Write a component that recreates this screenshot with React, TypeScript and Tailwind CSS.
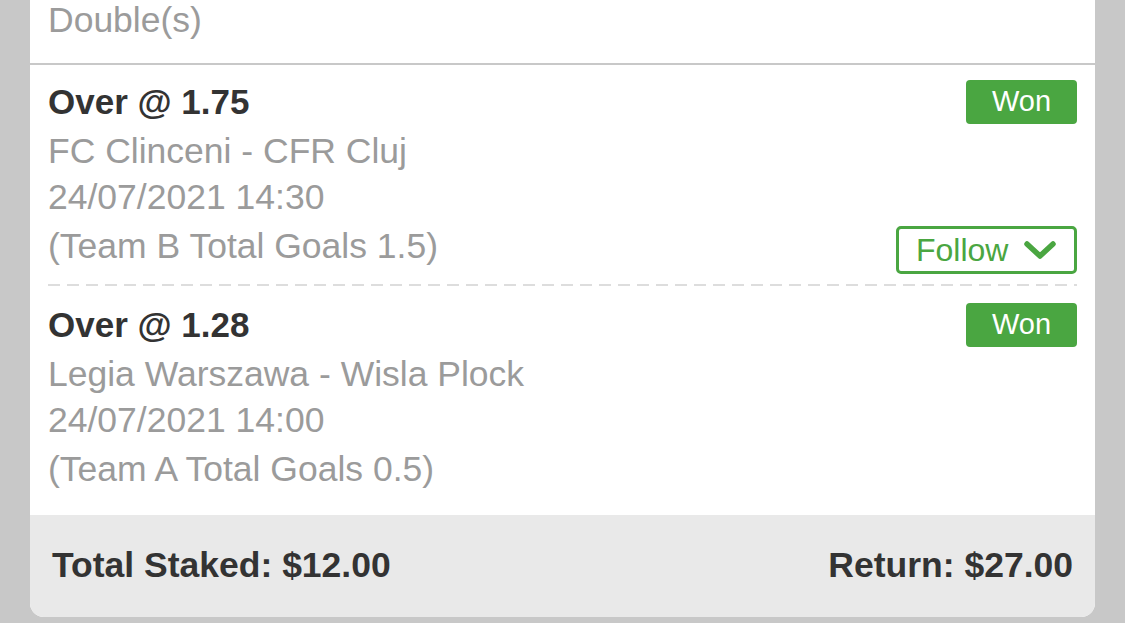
const FONT = { fontFamily: '"Liberation Sans", Arial, Helvetica, sans-serif' };

type Selection = {
  title: string;
  match: string;
  date: string;
  market: string;
  follow?: boolean;
};

const SELECTIONS: Selection[] = [
  {
    title: 'Over @ 1.75',
    match: 'FC Clinceni - CFR Cluj',
    date: '24/07/2021 14:30',
    market: '(Team B Total Goals 1.5)',
    follow: true,
  },
  {
    title: 'Over @ 1.28',
    match: 'Legia Warszawa - Wisla Plock',
    date: '24/07/2021 14:00',
    market: '(Team A Total Goals 0.5)',
  },
];

function Chevron() {
  return (
    <svg width="32" height="20" viewBox="0 0 32 20" fill="none">
      <polyline
        points="3,4 16,16 29,4"
        stroke="#4aa641"
        strokeWidth="5.5"
        strokeLinecap="round"
        strokeLinejoin="round"
      />
    </svg>
  );
}

function WonBadge() {
  return (
    <div className="flex h-[44px] w-[111px] items-center justify-center rounded-[4px] bg-[#4aa641] text-[29px] text-white">
      Won
    </div>
  );
}

function SelectionBlock({ sel, first }: { sel: Selection; first: boolean }) {
  return (
    <div className={first ? 'px-[18px] pt-[11px] pb-[10px]' : 'px-[18px] pt-[13px] pb-[18px]'}>
      <div className="flex items-center justify-between">
        <span className="text-[35px] font-bold leading-[52px] text-[#333]">{sel.title}</span>
        <WonBadge />
      </div>
      <div className="text-[35.5px] leading-[46px] text-[#9b9b9b]">{sel.match}</div>
      <div className="text-[35.5px] leading-[46px] text-[#9b9b9b]">{sel.date}</div>
      <div className="flex h-[54px] justify-between">
        <span className="text-[35.5px] leading-[52px] text-[#9b9b9b]">{sel.market}</span>
        {sel.follow && (
          <button className="flex h-[48px] w-[181px] items-center gap-[16px] self-end rounded-[5px] border-[3px] border-[#4aa641] pl-[17px] text-[32px] text-[#4aa641]">
            Follow
            <Chevron />
          </button>
        )}
      </div>
    </div>
  );
}

export default function App() {
  return (
    <div className="h-[623px] w-full overflow-hidden bg-[#c8c8c8] px-[30px]" style={FONT}>
      <div className="flex h-[617px] flex-col overflow-hidden rounded-b-[14px] bg-white">
        {/* Bet type header, cut off at the top */}
        <div className="h-[64px] px-[18px]">
          <div className="-mt-[3px] text-[35.5px] leading-[46px] text-[#9b9b9b]">Double(s)</div>
        </div>
        <div className="h-[2px] bg-[#c8c8c8]" />

        <SelectionBlock sel={SELECTIONS[0]} first />
        <div className="mx-[18px] h-[2px] bg-[repeating-linear-gradient(90deg,#dddddd_0_12px,transparent_12px_19px)]" />
        <SelectionBlock sel={SELECTIONS[1]} first={false} />

        {/* Totals */}
        <div className="mt-auto flex h-[104px] items-center justify-between bg-[#e9e9e9] px-[22px] text-[35.5px] font-bold text-[#333]">
          <span>Total Staked: $12.00</span>
          <span>Return: $27.00</span>
        </div>
      </div>
    </div>
  );
}
